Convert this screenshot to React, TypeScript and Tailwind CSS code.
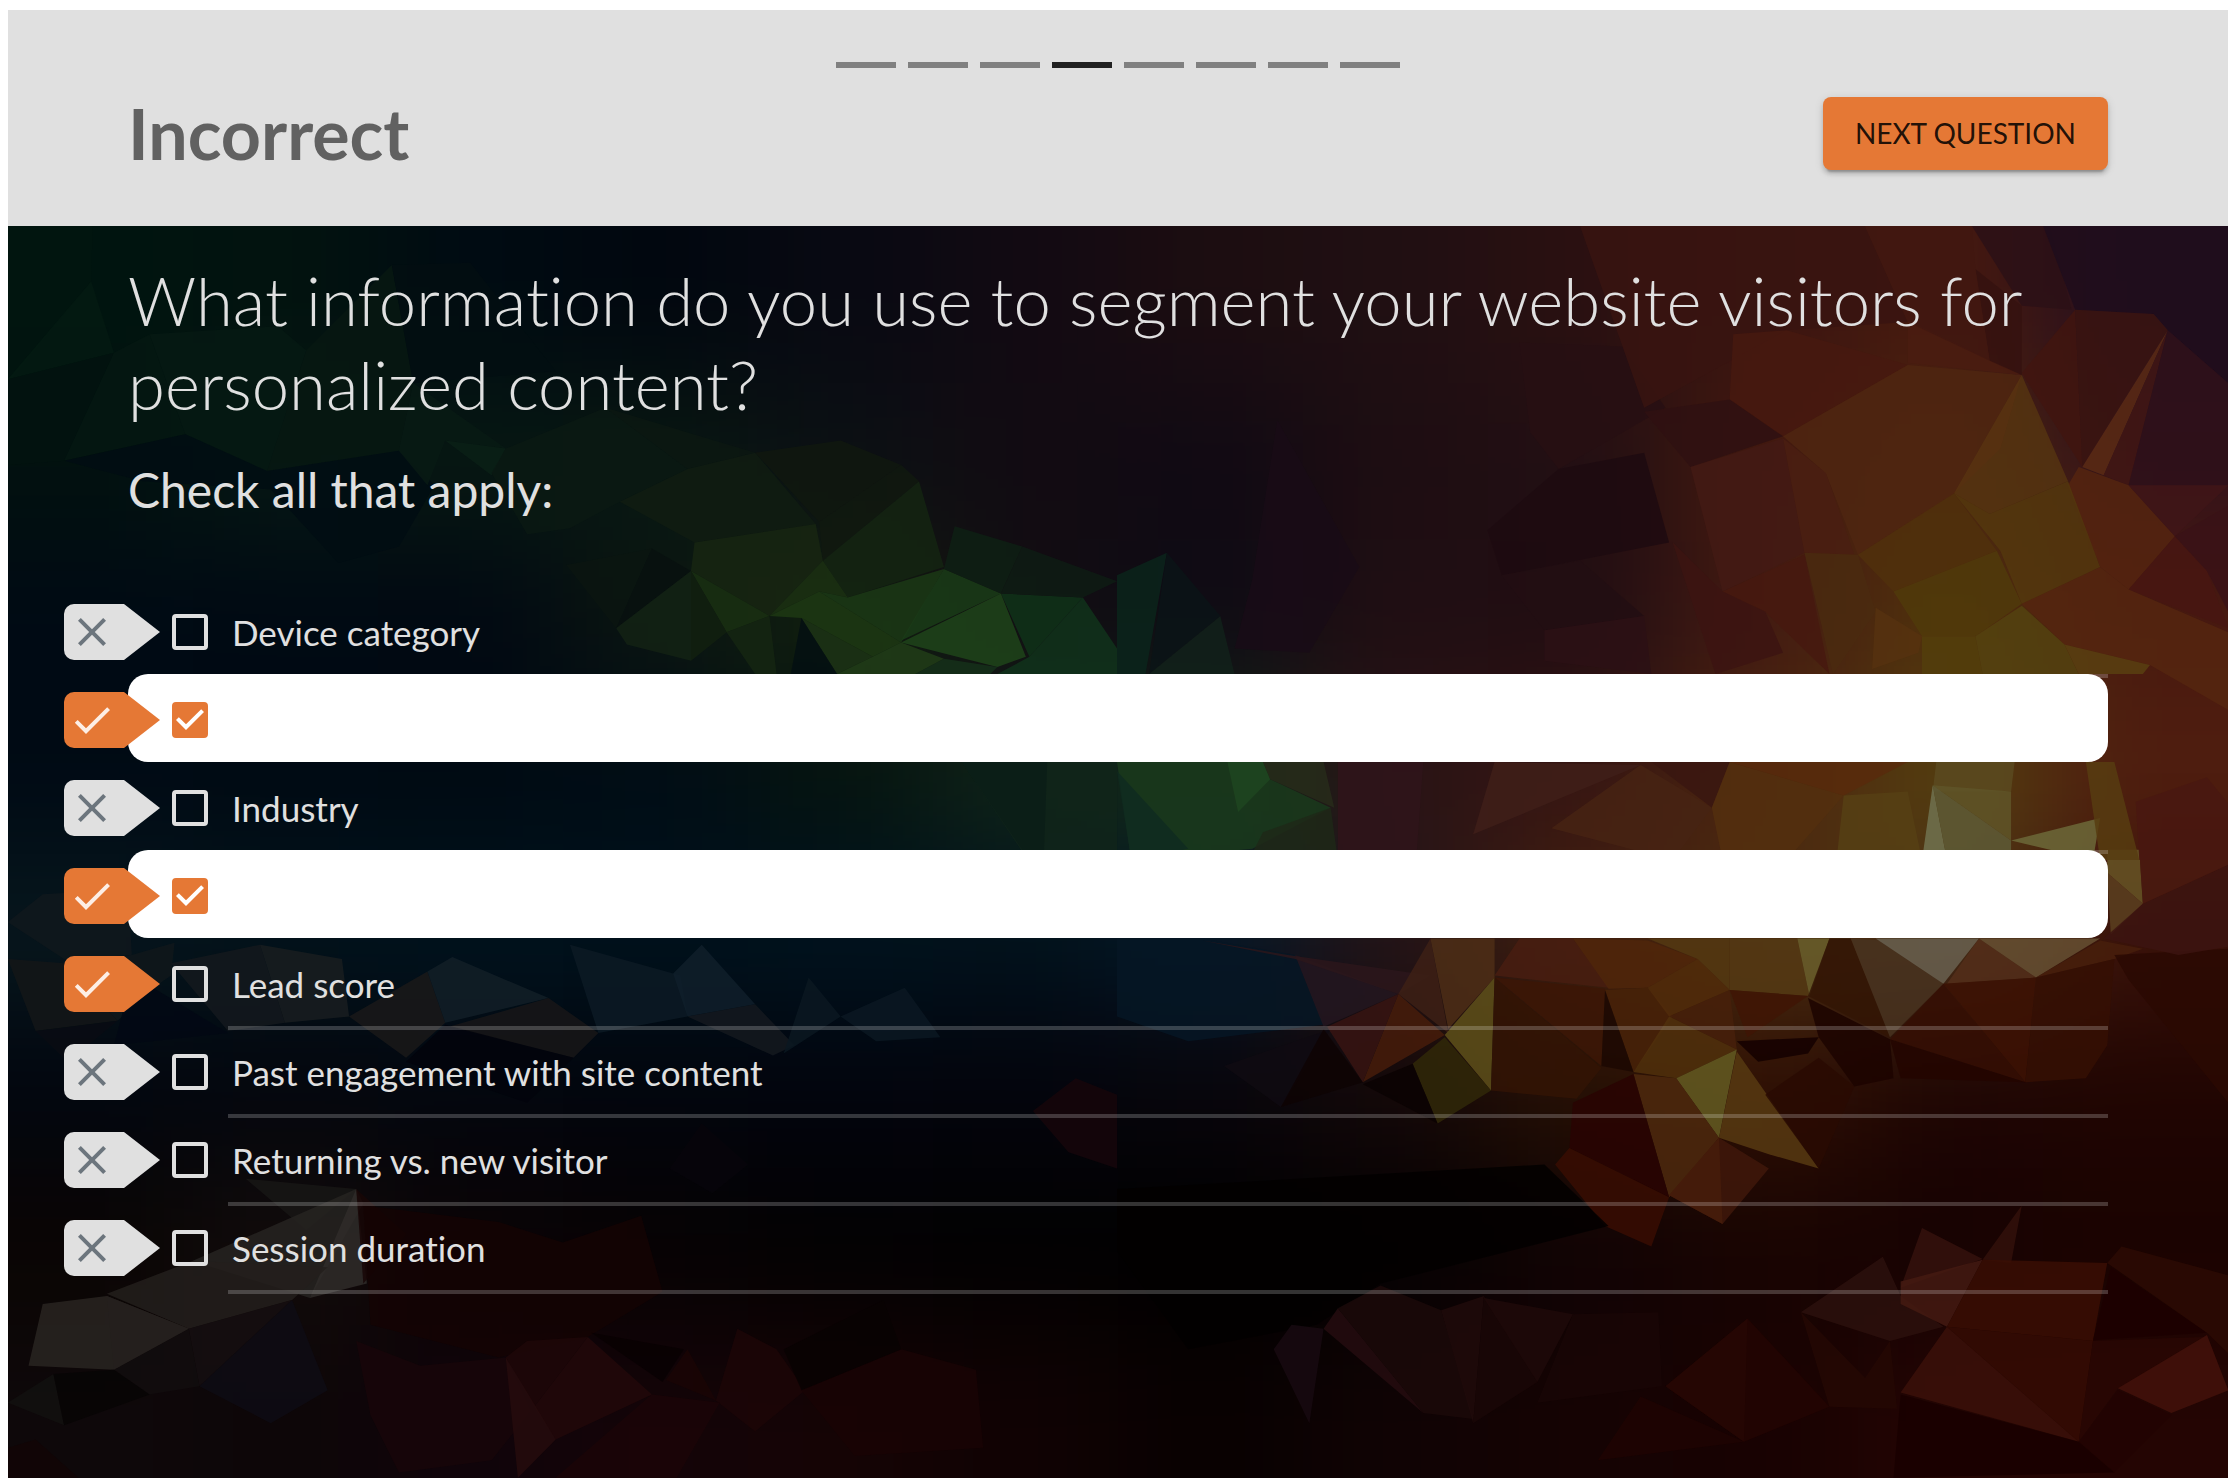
import React from "react";

type Facet = [points: string, fill: string];

/* Soft colour field under the facets: 12 columns by 8 rows. */
const FIELD: string[][] = [
  ["#00140f", "#02130f", "#000b12", "#01070f", "#080912", "#120a12", "#1c0d11", "#200f12", "#2a1011", "#3a1410", "#46190f", "#240e1e"],
  ["#02110f", "#061814", "#071812", "#081812", "#0b1013", "#120b12", "#100a13", "#1d0d12", "#220f13", "#43190f", "#4d260f", "#33121a"],
  ["#000a14", "#000913", "#010812", "#0b1511", "#12200f", "#120d12", "#0e0b14", "#200e13", "#200d12", "#431a12", "#50320c", "#48190f"],
  ["#000a14", "#000a13", "#000a12", "#000c15", "#05130f", "#102518", "#142a18", "#2a1315", "#371512", "#4d260f", "#543f0f", "#501e0f"],
  ["#07171d", "#02131c", "#00131e", "#00121d", "#00131f", "#01121d", "#04182a", "#241418", "#43200f", "#4a2c0f", "#4a3018", "#3a1109"],
  ["#02060f", "#04060d", "#03060e", "#02050d", "#02040d", "#04040c", "#08050b", "#140808", "#261004", "#301004", "#1e0503", "#200502"],
  ["#0a0503", "#120c0b", "#0a0304", "#060203", "#020102", "#010101", "#000000", "#040102", "#100304", "#180402", "#160202", "#1a0301"],
  ["#0e080a", "#0d0608", "#10040a", "#140408", "#150405", "#100203", "#080101", "#100304", "#150303", "#180202", "#240503", "#240503"],
];

const TOP_LEFT: Facet[] = [
  ["11,15 130,15 128,150 11,400", "#01150f"],
  ["128,150 160,325 11,390", "#031a12"],
  ["160,325 90,590 11,600 11,390", "#02130f"],
  ["160,325 210,280 260,525 90,590", "#051812"],
  ["210,280 390,260 430,320 375,615 260,525", "#061913"],
  ["430,320 550,110 580,400 560,565 375,615", "#071812"],
  ["550,110 660,105 780,370 580,400", "#020e12"],
  ["90,590 260,525 375,615 560,565 610,650 560,800 475,840 380,660 200,640", "#010d13"],
  ["580,400 710,560 625,540 600,650 560,565", "#081a14"],
  ["625,540 710,560 690,625", "#0b2016"],
  ["710,560 850,460 965,610 870,690 800,755 740,770 690,620", "#0a1913"],
  ["850,460 1060,570 965,610", "#0c1712"],
  ["965,610 1060,570 1145,745 975,790 870,690", "#101c12"],
  ["1060,570 1180,540 1265,600 1150,740", "#11170f"],
  ["1290,640 1325,850 1190,925 1155,835", "#142412"],
  ["1265,600 1290,640 1155,835 1150,740", "#11190f"],
  ["975,790 1145,745 1155,835 1080,970 970,860", "#182612"],
  ["795,845 915,805 865,1000", "#0a1511"],
  ["915,805 970,860 865,1000", "#08110f"],
  ["970,860 970,1080 880,1040 865,1000", "#132214"],
  ["970,860 1080,970 1020,1010", "#1a3012"],
  ["970,860 1020,1010 970,1080", "#12200f"],
  ["1020,1010 1080,970 1090,1112 1060,1112", "#152612"],
  ["1155,835 1190,925 1150,910 1080,970", "#1b3012"],
  ["1080,970 1150,910 1265,1035 1225,1070 1125,975", "#1d3813"],
  ["1190,925 1325,855 1265,1035 1150,910", "#1b3815"],
  ["1325,855 1405,915 1265,1030", "#1a3c18"],
  ["1405,915 1440,1070 1400,1095 1265,1035", "#1f441a"],
  ["1405,915 1520,925 1445,1070", "#0f3219"],
  ["1125,975 1225,1070 1175,1112", "#1c3315"],
  ["1265,1035 1325,1075 1285,1112 1175,1112 1225,1070", "#213d18"],
  ["1325,1075 1400,1095 1390,1112 1285,1112", "#15301a"],
  ["1340,750 1435,800 1405,915 1325,855", "#0e2014"],
  ["1435,800 1568,885 1520,925 1405,915", "#0e1c14"],
  ["1520,925 1568,1050 1568,1112 1400,1112 1445,1070", "#10331b"],
  ["1125,975 1175,1112 1110,1112", "#030f12"],
  ["1350,1328 1568,1328 1568,1568 1440,1560", "#10251a"],
  ["1350,1328 1470,1328 1465,1568 1445,1568", "#0a1d18"],
];

const TOP_RIGHT: Facet[] = [
  ["0,870 70,815 40,1112 0,1112", "#0b241b"],
  ["45,1112 145,970 165,1112", "#12211a"],
  ["70,815 145,970 45,1112", "#0a1416"],
  ["225,490 340,850 270,1060 165,1050 190,880", "#190c16"],
  ["565,300 710,310 770,460 620,610 580,520", "#270f13"],
  ["620,610 740,570 775,790 540,870 520,760", "#1d0b10"],
  ["540,870 650,835 740,970 600,1005", "#220e13"],
  ["600,1005 740,970 750,1112 600,1080", "#2b1115"],
  ["650,15 1050,15 1110,250 940,270 740,460", "#381410"],
  ["865,280 940,270 1110,355 935,530 860,440", "#46190f"],
  ["740,470 860,440 935,530 805,605", "#2f1112"],
  ["805,605 935,535 965,815 850,910", "#431a14"],
  ["935,535 995,620 1035,820 965,815", "#4a1f12"],
  ["935,530 1110,355 1270,380 1175,670 1040,820 995,620", "#4f2611"],
  ["1270,380 1335,640 1225,720 1175,670", "#553411"],
  ["1270,380 1240,560 1175,670", "#573011"],
  ["1110,245 1270,380 1110,350", "#4a1c10"],
  ["1205,120 1270,210 1270,380 1225,345", "#35120f"],
  ["1050,15 1200,15 1205,120 1225,345 1110,250", "#411710"],
  ["1200,15 1310,15 1340,220 1270,210", "#2c1016"],
  ["1300,15 1560,15 1560,400 1475,270 1455,230 1345,220", "#1e0d1c"],
  ["1270,375 1345,220 1355,605", "#41150f"],
  ["1345,220 1455,230 1475,270 1355,605", "#3a1410"],
  ["1475,270 1355,605 1385,625", "#5b2a14"],
  ["1475,270 1385,625 1420,650", "#411614"],
  ["1475,270 1560,400 1560,650 1420,650", "#2e111a"],
  ["1350,605 1420,650 1485,775 1420,905 1380,850 1335,650", "#55240f"],
  ["1420,650 1560,650 1485,775", "#3f1517"],
  ["1485,775 1530,860 1560,1000 1420,905", "#481612"],
  ["1485,775 1560,700 1560,960 1530,860", "#3a1216"],
  ["1420,905 1560,1010 1560,1200 1450,1090 1330,1040 1270,940 1380,850", "#55260f"],
  ["1175,670 1225,720 1335,640 1380,850 1270,940 1240,810", "#54370d"],
  ["1040,820 1175,670 1235,810 1090,910", "#50300c"],
  ["1090,910 1235,810 1270,940 1205,1020 1130,1020", "#50390a"],
  ["965,815 1040,820 1065,960 1005,1112", "#4a2a0f"],
  ["1065,950 1130,1020 1125,1060 1060,1100", "#56310f"],
  ["1130,1020 1205,1020 1215,1112 1130,1112", "#523e0c"],
  ["1205,1020 1270,945 1330,1040 1350,1112 1215,1112", "#54420f"],
  ["1330,1040 1450,1090 1440,1112 1350,1112", "#594010"],
  ["850,910 965,820 1000,1112 910,960", "#47190f"],
  ["780,790 850,910 910,960 935,1060 840,1112", "#3c1412"],
  ["0,1328 205,1328 215,1370 300,1440 190,1540 20,1568", "#1a391c"],
  ["0,1350 100,1540 20,1568", "#0f2a20"],
  ["155,1328 205,1328 215,1370 170,1450", "#1f4520"],
  ["205,1328 290,1328 305,1440 215,1370", "#272c1a"],
  ["300,1440 310,1568 185,1568 205,1500", "#1e2817"],
  ["310,1328 430,1328 420,1568 310,1568", "#2f141a"],
  ["735,1335 500,1505 530,1328", "#3f1f19"],
  ["735,1335 835,1440 780,1568 610,1490", "#472313"],
  ["750,1328 860,1328 835,1440", "#3a1610"],
  ["835,1440 860,1328 1020,1410 940,1568 850,1568", "#532f0e"],
  ["860,1328 1110,1328 1020,1410", "#582a0c"],
  ["1020,1410 1110,1400 1130,1568 1010,1568", "#564014"],
  ["1150,1328 1260,1328 1255,1400 1145,1400", "#5a4a20"],
  ["1145,1385 1255,1400 1255,1520", "#5f5528"],
  ["1145,1385 1165,1568 1130,1568", "#707250"],
  ["1145,1385 1255,1520 1255,1568 1165,1568", "#5e5a36"],
  ["1255,1520 1380,1465 1370,1568", "#6c6838"],
  ["1360,1328 1400,1328 1435,1568 1380,1568", "#573c10"],
  ["1430,1425 1530,1365 1560,1430 1560,1568 1435,1568", "#491710"],
];

const BOTTOM_LEFT: Facet[] = [
  ["11,200 60,132 180,120 185,280 90,290", "#11181c"],
  ["11,290 90,300 165,440 50,465", "#141617"],
  ["185,280 245,250 240,330 215,360 165,440 90,300", "#10171b"],
  ["50,465 165,440 95,540", "#090c13"],
  ["175,400 215,360 320,470 160,500", "#020814"],
  ["240,300 365,255 400,445 320,465", "#14191d"],
  ["365,255 480,290 490,430 400,445", "#191d20"],
  ["490,430 600,320 625,445 570,530", "#1a1919"],
  ["600,320 635,285 770,385 625,445", "#121f27"],
  ["770,385 840,470 805,530 630,455", "#181617"],
  ["840,470 800,255 955,330 965,430", "#0c1a24"],
  ["985,255 1060,400 965,430 945,325", "#0f1f2a"],
  ["965,430 1060,400 1115,500 1085,525", "#14191f"],
  ["1135,335 1180,430 1100,520", "#0a1721"],
  ["1180,430 1270,360 1320,480 1230,490", "#0b1822"],
  ["625,450 805,530 740,640 570,540", "#02030c"],
  ["345,825 500,850 430,950", "#181615"],
  ["500,850 510,885 435,1115 270,1025", "#262321"],
  ["500,850 515,1080 435,1115", "#2f2b29"],
  ["500,850 570,960 510,1080", "#180606"],
  ["270,1025 460,1040 410,1120 265,1190 150,1105", "#231f1c"],
  ["60,1130 150,1110 265,1190 160,1290 40,1280", "#292521"],
  ["150,1110 265,1190 160,1290", "#24201d"],
  ["265,1190 410,1120 280,1330", "#150e11"],
  ["410,1120 460,1340 380,1420 280,1330", "#0e0c14"],
  ["160,1290 265,1190 280,1330 210,1350", "#120d0e"],
  ["11,1370 75,1300 90,1425", "#12100f"],
  ["90,1425 75,1300 160,1290 210,1350", "#070505"],
  ["510,890 700,930 790,980 900,915 930,1100 825,1210 700,1260 520,1180", "#140303"],
  ["500,1220 590,1280 710,1260 745,1390 690,1510 560,1540 520,1400", "#170609"],
  ["740,1220 825,1210 750,1380 710,1260", "#1f0708"],
  ["825,1210 915,1350 780,1460 750,1380", "#220809"],
  ["710,1260 780,1460 727,1553", "#260c0d"],
  ["965,1240 1005,1365 935,1315", "#1a0505"],
  ["1035,1190 1090,1240 1130,1340 1060,1440 1005,1365", "#1c0607"],
  ["1125,1340 1265,1240 1370,1290 1380,1480 1200,1500", "#190405"],
  ["915,1350 1010,1370 950,1553 780,1553", "#1b0507"],
  ["830,1200 960,1240 930,1320", "#080102"],
  ["1240,1120 1265,1240 1125,1340 1100,1240", "#080202"],
  ["1450,660 1510,580 1568,620 1568,800 1500,760", "#16060b"],
  ["985,690 1050,790 1000,860 940,800", "#07050b"],
  ["11,1480 50,1460 110,1553 11,1553", "#120506"],
];

const BOTTOM_RIGHT: Facet[] = [
  ["0,240 120,240 250,280 290,450 100,490 0,430", "#061624"],
  ["250,280 395,375 290,455", "#231620"],
  ["120,245 240,280 440,330 395,375 250,290", "#2b161b"],
  ["150,550 300,460 230,650", "#0f0a12"],
  ["395,375 440,240 465,470", "#3d2015"],
  ["440,240 530,240 530,335 465,460", "#4d2e16"],
  ["530,335 460,475 525,610", "#5e501a"],
  ["460,480 525,610 450,690 415,545", "#302808"],
  ["395,375 460,475 345,590", "#461c0a"],
  ["395,375 345,590 295,455", "#371412"],
  ["290,460 345,590 230,650", "#0e0304"],
  ["345,595 415,545 450,690", "#0b0202"],
  ["530,335 685,362 680,550", "#3c1606"],
  ["530,335 680,555 645,630 525,610", "#321405"],
  ["530,330 565,240 640,240 690,360", "#481d10"],
  ["640,240 745,245 815,290 745,360 690,362", "#50260a"],
  ["745,240 860,240 860,365 815,290", "#543812"],
  ["685,365 745,360 780,430 725,565", "#482208"],
  ["685,365 725,565 680,550", "#1c0802"],
  ["745,360 815,290 860,365 775,430", "#512b0a"],
  ["860,365 870,510 775,430", "#46200a"],
  ["860,240 955,240 972,380 860,365", "#553a14"],
  ["955,240 1000,240 972,380", "#6a5f2c"],
  ["860,365 970,380 885,480", "#401505"],
  ["870,490 985,480 970,520 900,540", "#140000"],
  ["775,430 870,510 785,580 725,565", "#50300c"],
  ["870,510 785,580 845,725", "#645c22"],
  ["870,515 985,800 915,765 845,725", "#573a12"],
  ["785,580 845,725 775,870 725,570", "#4d290e"],
  ["845,725 775,865 850,935 915,800", "#3f180a"],
  ["845,725 850,935 775,865", "#471c0a"],
  ["640,640 725,570 775,870 635,750", "#290402"],
  ["635,750 775,870 750,990 685,940 615,790", "#380d02"],
  ["910,620 985,530 1035,600 985,800", "#290a02"],
  ["1000,240 1030,240 1085,480 970,380", "#321505"],
  ["1030,240 1075,245 1160,350 1085,480", "#483220"],
  ["1065,240 1210,240 1160,350", "#686050"],
  ["1210,240 1165,350 1290,335", "#532e1a"],
  ["1210,240 1380,240 1290,335", "#665032"],
  ["1290,335 1380,245 1440,265 1400,290", "#481e0c"],
  ["1160,350 1290,335 1275,590", "#3d1203"],
  ["1160,350 1275,590 1085,485", "#350e03"],
  ["1290,335 1400,290 1390,500 1360,580 1275,590", "#350f03"],
  ["970,385 1085,485 1090,580 1035,600 985,480", "#1c0400"],
  ["1085,485 1275,590 1100,580", "#230500"],
  ["1400,280 1560,265 1560,640 1420,340", "#2a0902"],
  ["1390,24 1435,24 1440,155 1390,80", "#665526"],
  ["1390,80 1440,155 1395,230", "#5b4020"],
  ["1440,155 1560,60 1560,260 1490,280 1385,240", "#3c1410"],
  ["1435,24 1560,24 1560,60 1440,155", "#4a1a10"],
  ["0,850 600,790 690,940 370,1080 280,1180 100,1240 0,1000", "#020000"],
  ["1130,945 1215,1020 1100,1090", "#35120d"],
  ["1270,890 1255,1030 1215,1022", "#32100a"],
  ["960,1150 1075,1015 1100,1110 1160,1185 1085,1220", "#2c100d"],
  ["1100,1075 1215,1022 1165,1185 1100,1130", "#441a12"],
  ["1215,1022 1390,1030 1370,1220 1165,1185", "#390e04"],
  ["1395,1040 1530,1200 1370,1218", "#1c0000"],
  ["1390,1030 1410,990 1560,1060 1560,1250 1530,1200", "#2b0a03"],
  ["1165,1185 1350,1465 1100,1345", "#3b1009"],
  ["1165,1185 1370,1220 1350,1465", "#350c04"],
  ["1370,1220 1525,1210 1405,1335 1350,1465", "#290703"],
  ["1530,1205 1560,1340 1480,1395 1405,1335", "#43120a"],
  ["1405,1340 1480,1400 1400,1540 1350,1465", "#220402"],
  ["960,1150 1050,1310 1085,1220 1095,1385 1000,1380", "#240804"],
  ["885,1165 1000,1380 880,1465 770,1330", "#230502"],
  ["885,1165 880,1465 770,1330", "#260703"],
  ["220,1240 245,1180 290,1190 270,1420", "#180910"],
  ["290,1190 310,1140 430,1395", "#240c0f"],
  ["370,1085 455,1145 500,1410 430,1395 310,1140", "#1b0909"],
  ["455,1145 515,1110 500,1420", "#200a0b"],
  ["515,1110 590,1320 500,1420", "#1a0707"],
  ["515,1115 640,1155 590,1320", "#1e0909"],
  ["640,1155 760,1150 765,1330 590,1370", "#190606"],
  ["735,1355 880,1465 675,1510", "#1f0302"],
  ["1100,1350 1350,1465 1400,1540 1090,1553", "#190000"],
];

const QUADRANTS: { transform: string; facets: Facet[] }[] = [
  { transform: "translate(0 840) scale(0.7124 0.4107)", facets: BOTTOM_LEFT },
  { transform: "translate(1117 840) scale(0.7124 0.4107)", facets: BOTTOM_RIGHT },
  { transform: "translate(0 220) scale(0.7124 0.4082)", facets: TOP_LEFT },
  { transform: "translate(1117 220) scale(0.7124 0.4082)", facets: TOP_RIGHT },
];

function Backdrop() {
  return (
    <svg
      className="absolute inset-0 h-full w-full"
      viewBox="8 226 2220 1252"
      preserveAspectRatio="none"
      aria-hidden="true"
    >
      <defs>
        <filter id="field-blur" x="-5%" y="-5%" width="110%" height="110%" colorInterpolationFilters="sRGB">
          <feGaussianBlur stdDeviation="60" />
        </filter>
      </defs>
      <rect x="8" y="226" width="2220" height="1252" fill="#0a060a" />
      <g filter="url(#field-blur)">
        {FIELD.map((row, r) =>
          row.map((fill, c) => {
            const left = c === 0 ? -200 : 8 + c * 185;
            const top = r === 0 ? 60 : 226 + r * 157;
            const right = c === 11 ? 2440 : 8 + (c + 1) * 185;
            const bottom = r === 7 ? 1650 : 226 + (r + 1) * 157;
            return (
              <rect key={`${r}-${c}`} x={left} y={top} width={right - left} height={bottom - top} fill={fill} />
            );
          })
        )}
      </g>
      {QUADRANTS.map((q) => (
        <g key={q.transform} transform={q.transform} fillOpacity="0.85">
          {q.facets.map(([points, fill]) => (
            <polygon key={points} points={points} fill={fill} />
          ))}
        </g>
      ))}
    </svg>
  );
}

function Tag({ correct }: { correct: boolean }) {
  return (
    <svg
      className="relative z-10 -mr-8 h-14 w-24 shrink-0"
      viewBox="0 0 96 56"
      role="img"
      aria-label={correct ? "Correct answer" : "Wrong answer"}
    >
      <path d="M10 0H60L96 28 60 56H10A10 10 0 0 1 0 46V10A10 10 0 0 1 10 0Z" fill={correct ? "#e57835" : "#e0e0e0"} />
      <g transform="translate(4 4) scale(2)">
        {correct ? (
          <path d="M9 16.17 4.83 12l-1.42 1.41L9 19 21 7l-1.41-1.41z" fill="#fdeee5" />
        ) : (
          <path
            d="M19 6.41 17.59 5 12 10.59 6.41 5 5 6.41 10.59 12 5 17.59 6.41 19 12 13.41 17.59 19 19 17.59 13.41 12z"
            fill="#6c757d"
          />
        )}
      </g>
    </svg>
  );
}

type Option = { id: string; text: string; checked: boolean; correct: boolean };

const OPTIONS: Option[] = [
  { id: "device", text: "Device category", checked: false, correct: false },
  { id: "second", text: "", checked: true, correct: true },
  { id: "industry", text: "Industry", checked: false, correct: false },
  { id: "fourth", text: "", checked: true, correct: true },
  { id: "lead", text: "Lead score", checked: false, correct: true },
  { id: "engagement", text: "Past engagement with site content", checked: false, correct: false },
  { id: "returning", text: "Returning vs. new visitor", checked: false, correct: false },
  { id: "session", text: "Session duration", checked: false, correct: false },
];

function OptionRow({ option }: { option: Option }) {
  const { id, text, checked, correct } = option;
  return (
    <li className={checked ? "relative flex h-22 items-center pt-1" : "relative -mb-1 flex h-23 items-center"}>
      <Tag correct={correct} />
      <div
        className={
          checked
            ? "-mt-1 flex h-22 flex-1 items-center gap-5 rounded-[20px] bg-white pt-1 pl-11"
            : "flex h-23 flex-1 items-center gap-5 pl-11"
        }
      >
        <span className="grid size-9 shrink-0 place-items-center">
          <input
            id={id}
            type="checkbox"
            defaultChecked={checked}
            aria-label={text ? undefined : "Selected answer"}
            className="col-start-1 row-start-1 size-9 appearance-none rounded-[4px] border-4 border-[#e0e0e0] checked:border-[#e57835] checked:bg-[#e57835]"
          />
          {checked && (
            <svg className="pointer-events-none col-start-1 row-start-1 size-9" viewBox="3 3 18 18" aria-hidden="true">
              <path d="M10 17 5 12l1.41-1.41L10 14.17l7.59-7.59L19 8z" fill="#fff" />
            </svg>
          )}
        </span>
        {!checked && (
          <label
            htmlFor={id}
            className="flex h-23 flex-1 items-center border-y-4 border-t-transparent border-b-white/20 pl-1 text-[35px] leading-[52px] text-[#e0e0e0]"
          >
            {text}
          </label>
        )}
      </div>
    </li>
  );
}

const STEPS = [1, 2, 3, 4, 5, 6, 7, 8];

export default function App() {
  return (
    <div className="min-h-screen bg-white pt-[10px] pr-[6px] pb-[6px] pl-2 font-['Lato',sans-serif] [font-variant-ligatures:none]">
      <div className="flex min-h-[calc(100vh-16px)] flex-col">
        <header className="bg-[#e0e0e0] px-30 pt-13 pb-[51px]">
          <ol className="flex justify-center gap-3" aria-label="Question 4 of 8">
            {STEPS.map((n) => (
              <li key={n} className={n === 4 ? "h-1.5 w-15 bg-[#212121]" : "h-1.5 w-15 bg-[#808080]"} />
            ))}
          </ol>
          <div className="mt-[23px] flex items-center justify-between">
            <h1 className="text-[70px] leading-[84px] font-bold text-[#616161]">Incorrect</h1>
            <button
              type="button"
              className="rounded-lg bg-[#e57835] px-8 py-3 text-[28px] leading-[49px] text-black/87 shadow-[0_6px_2px_-4px_rgba(0,0,0,0.2),0_4px_4px_0_rgba(0,0,0,0.14),0_2px_10px_0_rgba(0,0,0,0.12)]"
            >
              NEXT QUESTION
            </button>
          </div>
        </header>
        <main className="relative flex-1 overflow-hidden">
          <Backdrop />
          <div className="relative px-30 pt-8 pb-16 text-[#e0e0e0]">
            <h2 className="text-[67px] leading-[84px] font-light">
              What information do you use to segment your website visitors for personalized content?
            </h2>
            <p className="mt-8 text-[48px] leading-[64px]">Check all that apply:</p>
            <ul className="mt-16 -ml-16">
              {OPTIONS.map((option) => (
                <OptionRow key={option.id} option={option} />
              ))}
            </ul>
          </div>
        </main>
      </div>
    </div>
  );
}
